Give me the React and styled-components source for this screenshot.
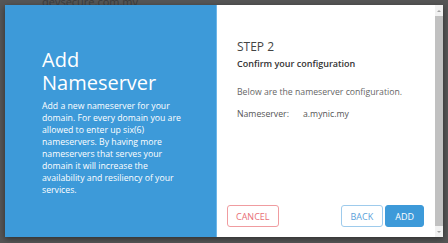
import React from "react";
import styled, { createGlobalStyle } from "styled-components";

const GlobalStyle = createGlobalStyle`
  html, body {
    margin: 0;
    padding: 0;
    background: #565656;
    font-family: "Open Sans", "Noto Sans", sans-serif;
  }
`;

const Backdrop = styled.div`
  position: relative;
  width: 448px;
  height: 243px;
  padding: 5px 5px 6px 5px;
  box-sizing: border-box;
  overflow: hidden;
`;

const BehindText = styled.div`
  position: absolute;
  top: -6px;
  left: 42px;
  font-size: 11px;
  color: #3c3c3c;
  white-space: nowrap;
`;

const Modal = styled.div`
  position: relative;
  display: flex;
  height: 100%;
  box-shadow: 0 2px 6px rgba(0, 0, 0, 0.45);
`;

const Intro = styled.div`
  width: 212px;
  background: #3d9ad9;
  border-right: 1px solid #6db6e8;
  padding: 43px 0 0 37px;
  box-sizing: border-box;
  color: #fff;
`;

const Title = styled.h1`
  margin: 0 0 6px;
  font-size: 20px;
  line-height: 23px;
  font-weight: 400;
`;

const Lead = styled.p`
  margin: 0;
  font-size: 8.7px;
  line-height: 12px;
  white-space: nowrap;
`;

const Body = styled.div`
  flex: 1;
  display: flex;
  flex-direction: column;
  background: #fff;
  padding: 34px 0 10px 20px;
  color: #555;
`;

const Step = styled.div`
  font-size: 12px;
  line-height: 16px;
  color: #444;
`;

const Subtitle = styled.div`
  margin-top: 3px;
  font-size: 9px;
  line-height: 12px;
  font-weight: 600;
  color: #333;
`;

const Note = styled.div`
  margin-top: 16px;
  font-size: 8.7px;
  line-height: 12px;
  color: #666;
`;

const Field = styled.div`
  display: flex;
  margin-top: 10px;
  font-size: 8.7px;
  line-height: 12px;
  color: #555;
`;

const Label = styled.span`
  width: 66px;
`;

const Footer = styled.div`
  margin-top: auto;
  margin-left: -10px;
  padding-right: 11px;
  display: flex;
  align-items: center;
`;

const Spacer = styled.div`
  flex: 1;
`;

const Button = styled.button`
  height: 22px;
  padding: 0 ${(p) => p.$pad || 8}px;
  margin-left: ${(p) => p.$gap || 0}px;
  border-radius: 3px;
  font-family: inherit;
  font-size: 9px;
  border: 1px solid ${(p) => p.$border};
  background: ${(p) => p.$bg || "#fff"};
  color: ${(p) => p.$color};
  cursor: pointer;
`;

const Scrollbar = styled.div`
  width: 8px;
  background: #f1f1f1;
  display: flex;
  flex-direction: column;
  align-items: center;
`;

const Arrow = styled.div`
  height: 11px;
  display: flex;
  align-items: center;
  justify-content: center;
  &::after {
    content: "";
    border-left: 2px solid transparent;
    border-right: 2px solid transparent;
    ${(p) => (p.$down ? "border-top" : "border-bottom")}: 2px solid #a3a3a3;
  }
`;

const Thumb = styled.div`
  flex: 1;
  width: 8px;
  background: #c1c1c1;
`;

const leadLines = [
  "Add a new nameserver for your",
  "domain. For every domain you are",
  "allowed to enter up six(6)",
  "nameservers. By having more",
  "nameservers that serves your",
  "domain it will increase the",
  "availability and resiliency of your",
  "services.",
];

export default function App() {
  return (
    <>
      <GlobalStyle />
      <Backdrop>
        <BehindText>devsecure.com.my</BehindText>
        <Modal>
          <Intro>
            <Title>
              Add
              <br />
              Nameserver
            </Title>
            <Lead>
              {leadLines.map((line, i) => (
                <React.Fragment key={i}>
                  {line}
                  {i < leadLines.length - 1 && <br />}
                </React.Fragment>
              ))}
            </Lead>
          </Intro>
          <Body>
            <Step>STEP 2</Step>
            <Subtitle>Confirm your configuration</Subtitle>
            <Note>Below are the nameserver configuration.</Note>
            <Field>
              <Label>Nameserver:</Label>
              <span>a.mynic.my</span>
            </Field>
            <Footer>
              <Button $border="#f09ca0" $color="#e86e76">CANCEL</Button>
              <Spacer />
              <Button $pad={9} $border="#9ecbec" $color="#5ba2db">BACK</Button>
              <Button $gap={2} $pad={9} $border="#3d9ad9" $bg="#3d9ad9" $color="#fff">
                ADD
              </Button>
            </Footer>
          </Body>
          <Scrollbar>
            <Arrow />
            <Thumb />
            <Arrow $down />
          </Scrollbar>
        </Modal>
      </Backdrop>
    </>
  );
}
